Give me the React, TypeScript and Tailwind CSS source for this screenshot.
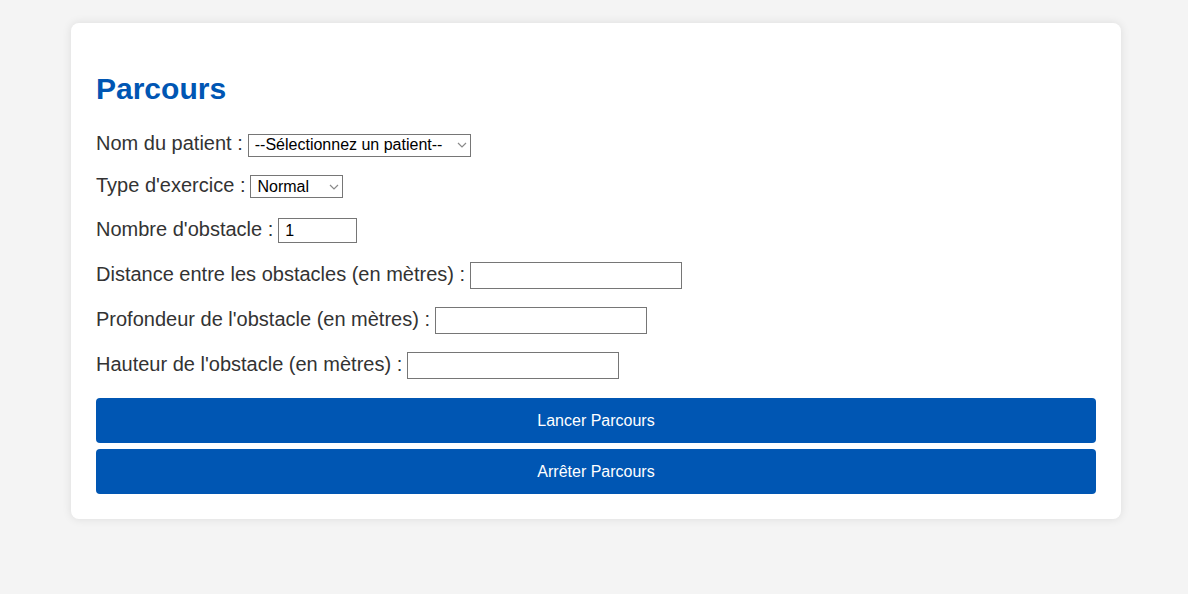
import React from 'react';

const font = { fontFamily: '"Liberation Sans", Arial, sans-serif' };

function Chevron() {
  return (
    <svg
      className="pointer-events-none absolute right-[4px] top-1/2 -translate-y-1/2"
      width="10"
      height="6"
      viewBox="0 0 10 6"
      fill="none"
    >
      <path d="M1 1l4 4 4-4" stroke="#8a8a8a" strokeWidth="1.2" />
    </svg>
  );
}

const inputCls =
  'h-[27px] w-[212px] border border-[#767676] bg-white px-[6px] text-[16px] leading-[18px] text-black';

export default function App() {
  return (
    <div className="min-h-[594px] bg-[#f4f4f4] pt-[23px]" style={font}>
      <div className="ml-[71px] w-[1050px] rounded-lg bg-white px-[25px] pb-[25px] pt-[51px] shadow-[0_0_10px_rgba(0,0,0,0.1)]">
        <h2 className="mb-[29px] text-[30px] font-bold leading-[30px] text-[#0056b3]">Parcours</h2>

        <div className="flex flex-col text-[20px] leading-[20px] text-[#333]">
          <div className="flex items-baseline gap-[5px]">
            <label>Nom du patient :</label>
            <span className="relative flex">
              <select className="h-[23px] w-[223px] appearance-none border border-[#767676] bg-white pl-[6px] pr-[20px] text-[16px] leading-[18px] text-black">
                <option>--Sélectionnez un patient--</option>
              </select>
              <Chevron />
            </span>
          </div>

          <div className="mt-[18px] flex items-baseline gap-[5px]">
            <label>Type d'exercice :</label>
            <span className="relative flex">
              <select className="h-[23px] w-[93px] appearance-none border border-[#767676] bg-white pl-[6px] pr-[20px] text-[16px] leading-[18px] text-black">
                <option>Normal</option>
              </select>
              <Chevron />
            </span>
          </div>

          <div className="mt-[20px] flex items-baseline gap-[5px]">
            <label>Nombre d'obstacle :</label>
            <input
              type="text"
              defaultValue="1"
              className="h-[25px] w-[79px] border border-[#767676] bg-white px-[6px] text-[16px] leading-[18px] text-black"
            />
          </div>

          <div className="mt-[19px] flex items-baseline gap-[5px]">
            <label>Distance entre les obstacles (en mètres) :</label>
            <input type="text" className={inputCls} />
          </div>

          <div className="mt-[18px] flex items-baseline gap-[5px]">
            <label>Profondeur de l'obstacle (en mètres) :</label>
            <input type="text" className={inputCls} />
          </div>

          <div className="mt-[18px] flex items-baseline gap-[5px]">
            <label>Hauteur de l'obstacle (en mètres) :</label>
            <input type="text" className={inputCls} />
          </div>

          <button className="mt-[19px] h-[45px] w-full rounded-[4px] bg-[#0056b3] text-[16px] leading-[18px] text-white">
            Lancer Parcours
          </button>
          <button className="mt-[6px] h-[45px] w-full rounded-[4px] bg-[#0056b3] text-[16px] leading-[18px] text-white">
            Arrêter Parcours
          </button>
        </div>
      </div>
    </div>
  );
}
